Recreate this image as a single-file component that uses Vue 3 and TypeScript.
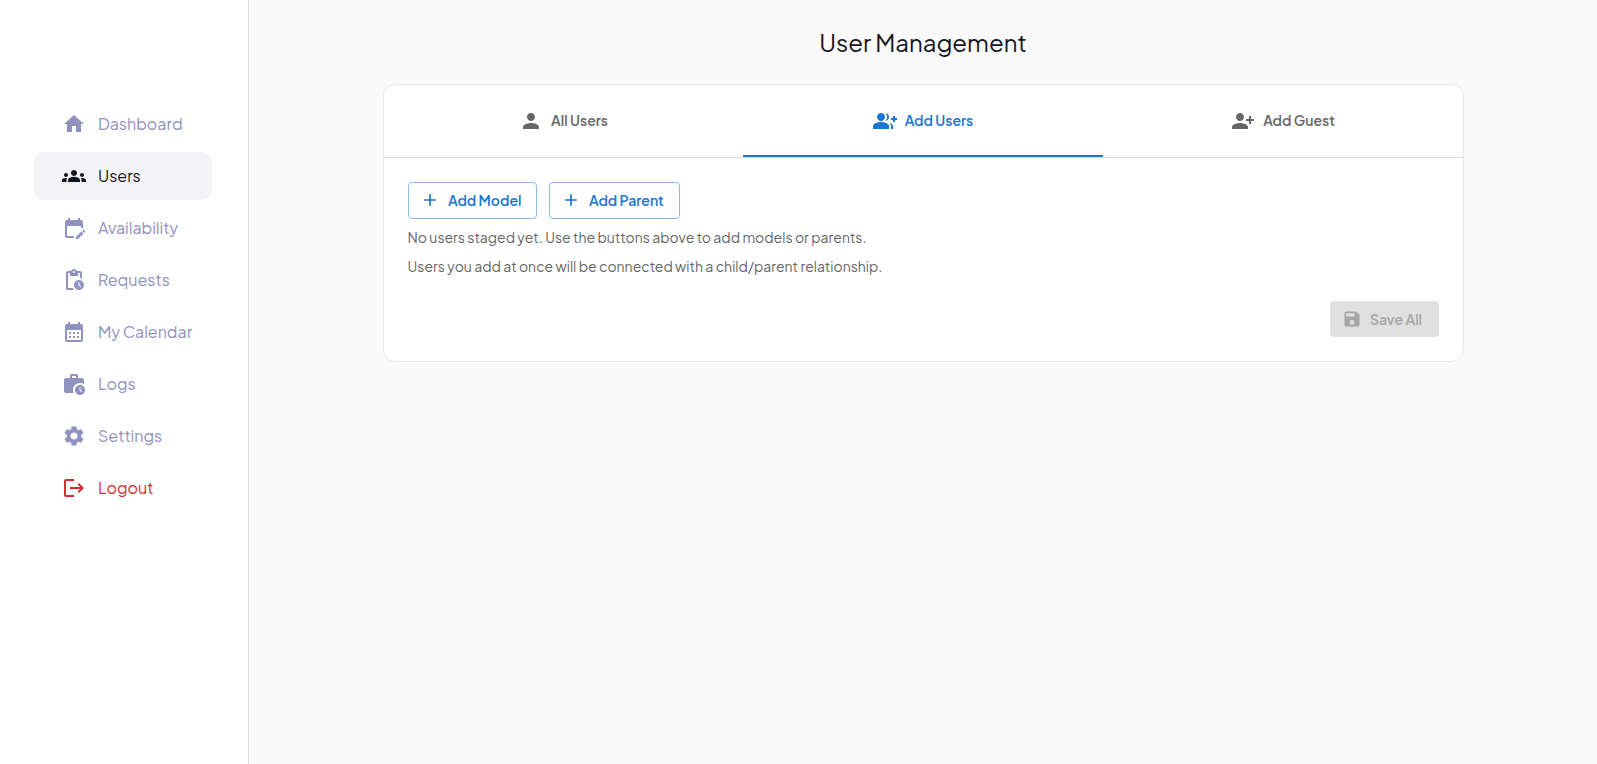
<script setup lang="ts">
interface NavItem {
  label: string
  icon: string
  kind: string
}

const nav: NavItem[] = [
  { label: 'Dashboard', kind: 'dashboard', icon: 'M10 20v-6h4v6h5v-8h3L12 3 2 12h3v8z' },
  {
    label: 'Users',
    kind: 'users',
    icon: 'M12 12.75c1.63 0 3.07.39 4.24.9 1.08.48 1.76 1.56 1.76 2.73V18H6v-1.61c0-1.18.68-2.26 1.76-2.73 1.17-.52 2.61-.91 4.24-.91M4 13c1.1 0 2-.9 2-2s-.9-2-2-2-2 .9-2 2 .9 2 2 2m1.13 1.1c-.37-.06-.74-.1-1.13-.1-.99 0-1.93.21-2.78.58C.48 14.9 0 15.62 0 16.43V18h4.5v-1.61c0-.83.23-1.61.63-2.29M20 13c1.1 0 2-.9 2-2s-.9-2-2-2-2 .9-2 2 .9 2 2 2m4 3.43c0-.81-.48-1.53-1.22-1.85-.85-.37-1.79-.58-2.78-.58-.39 0-.76.04-1.13.1.4.68.63 1.46.63 2.29V18H24zM12 6c1.66 0 3 1.34 3 3s-1.34 3-3 3-3-1.34-3-3 1.34-3 3-3',
  },
  {
    label: 'Availability',
    kind: 'availability',
    icon: 'M5 10h14v2h2V6c0-1.1-.9-2-2-2h-1V2h-2v2H8V2H6v2H5c-1.11 0-1.99.9-1.99 2L3 20c0 1.1.89 2 2 2h7v-2H5V10zm17.84 6.28-.71.71-2.12-2.12.71-.71c.39-.39 1.02-.39 1.41 0l.71.71c.39.39.39 1.02 0 1.41zm-3.54-.7 2.12 2.12-5.3 5.3H14v-2.12l5.3-5.3z',
  },
  {
    label: 'Requests',
    kind: 'requests',
    icon: 'M17 12c-2.76 0-5 2.24-5 5s2.24 5 5 5 5-2.24 5-5-2.24-5-5-5zm1.65 7.35L16.5 17.2V14h1v2.79l1.85 1.85-.7.71zM18 3h-3.18C14.4 1.84 13.3 1 12 1s-2.4.84-2.82 2H6c-1.1 0-2 .9-2 2v15c0 1.1.9 2 2 2h6.11c-.59-.57-1.07-1.25-1.42-2H6V5h2v3h8V5h2v5.08c.71.1 1.38.31 2 .6V5c0-1.1-.9-2-2-2zm-6 2c-.55 0-1-.45-1-1s.45-1 1-1 1 .45 1 1-.45 1-1 1z',
  },
  {
    label: 'My Calendar',
    kind: 'calendar',
    icon: 'M19 4h-1V2h-2v2H8V2H6v2H5c-1.11 0-1.99.9-1.99 2L3 20c0 1.1.89 2 2 2h14c1.1 0 2-.9 2-2V6c0-1.1-.9-2-2-2zm0 16H5V10h14v10zM9 14H7v-2h2v2zm4 0h-2v-2h2v2zm4 0h-2v-2h2v2zm-8 4H7v-2h2v2zm4 0h-2v-2h2v2zm4 0h-2v-2h2v2z',
  },
  {
    label: 'Logs',
    kind: 'logs',
    icon: 'M18 11c1.49 0 2.87.47 4 1.26V8c0-1.11-.89-2-2-2h-4V4c0-1.11-.89-2-2-2h-4c-1.11 0-2 .89-2 2v2H4c-1.11 0-1.99.89-1.99 2L2 19c0 1.11.89 2 2 2h7.68c-.43-.91-.68-1.92-.68-3 0-3.87 3.13-7 7-7zm-8-7h4v2h-4V4zM18 13c-2.76 0-5 2.24-5 5s2.24 5 5 5 5-2.24 5-5-2.24-5-5-5zm1.65 7.35L17.5 18.2V15h1v2.79l1.85 1.85-.7.71z',
  },
  {
    label: 'Settings',
    kind: 'settings',
    icon: 'M19.14 12.94c.04-.3.06-.61.06-.94 0-.32-.02-.64-.07-.94l2.03-1.58c.18-.14.23-.41.12-.61l-1.92-3.32c-.12-.22-.37-.29-.59-.22l-2.39.96c-.5-.38-1.03-.7-1.62-.94l-.36-2.54c-.04-.24-.24-.41-.48-.41h-3.84c-.24 0-.43.17-.47.41l-.36 2.54c-.59.24-1.13.57-1.62.94l-2.39-.96c-.22-.08-.47 0-.59.22L2.74 8.87c-.12.21-.08.47.12.61l2.03 1.58c-.05.3-.09.63-.09.94s.02.64.07.94l-2.03 1.58c-.18.14-.23.41-.12.61l1.92 3.32c.12.22.37.29.59.22l2.39-.96c.5.38 1.03.7 1.62.94l.36 2.54c.05.24.24.41.48.41h3.84c.24 0 .44-.17.47-.41l.36-2.54c.59-.24 1.13-.56 1.62-.94l2.39.96c.22.08.47 0 .59-.22l1.92-3.32c.12-.22.07-.47-.12-.61zM12 15.6c-1.98 0-3.6-1.62-3.6-3.6s1.62-3.6 3.6-3.6 3.6 1.62 3.6 3.6-1.62 3.6-3.6 3.6',
  },
  {
    label: 'Logout',
    kind: 'logout',
    icon: 'm17 7-1.41 1.41L18.17 11H8v2h10.17l-2.58 2.58L17 17l5-5zM4 5h8V3H4c-1.1 0-2 .9-2 2v14c0 1.1.9 2 2 2h8v-2H4z',
  },
]

const tabs: NavItem[] = [
  { label: 'All Users', kind: 'all', icon: 'M12 12c2.21 0 4-1.79 4-4s-1.79-4-4-4-4 1.79-4 4 1.79 4 4 4m0 2c-2.67 0-8 1.34-8 4v2h16v-2c0-2.66-5.33-4-8-4' },
  {
    label: 'Add Users',
    kind: 'add',
    icon: 'M22 9V7h-2v2h-2v2h2v2h2v-2h2V9zM8 12c2.21 0 4-1.79 4-4s-1.79-4-4-4-4 1.79-4 4 1.79 4 4 4m0 1c-2.67 0-8 1.34-8 4v3h16v-3c0-2.66-5.33-4-8-4m4.51-8.95C13.43 5.11 14 6.49 14 8s-.57 2.89-1.49 3.95C14.47 11.7 16 10.04 16 8s-1.53-3.7-3.49-3.95m4.02 9.78C17.42 14.66 18 15.7 18 17v3h2v-3c0-1.45-1.59-2.51-3.47-3.17',
  },
  {
    label: 'Add Guest',
    kind: 'guest',
    icon: 'M13 8c0-2.21-1.79-4-4-4S5 5.79 5 8s1.79 4 4 4 4-1.79 4-4m2 2v2h3v3h2v-3h3v-2h-3V7h-2v3zM1 18v2h16v-2c0-2.66-5.33-4-8-4s-8 1.34-8 4',
  },
]
</script>

<template>
  <div class="page">
    <aside class="sidebar">
      <nav class="nav">
        <a v-for="n in nav" :key="n.kind" class="item" :class="n.kind">
          <svg viewBox="0 0 24 24"><path :d="n.icon" /></svg>
          <span>{{ n.label }}</span>
        </a>
      </nav>
    </aside>
    <main class="main">
      <h1>User Management</h1>
      <section class="card">
        <div class="tabs">
          <button v-for="t in tabs" :key="t.kind" class="tab" :class="t.kind">
            <svg viewBox="0 0 24 24"><path :d="t.icon" /></svg>
            <span>{{ t.label }}</span>
          </button>
        </div>
        <div class="body">
          <div class="actions">
            <button class="outlined model">
              <svg viewBox="0 0 24 24"><path d="M19 13h-6v6h-2v-6H5v-2h6V5h2v6h6z" /></svg>
              <span>Add Model</span>
            </button>
            <button class="outlined parent">
              <svg viewBox="0 0 24 24"><path d="M19 13h-6v6h-2v-6H5v-2h6V5h2v6h6z" /></svg>
              <span>Add Parent</span>
            </button>
          </div>
          <p class="first">No users staged yet. Use the buttons above to add models or parents.</p>
          <p class="second">Users you add at once will be connected with a child/parent relationship.</p>
          <div class="footer">
            <button class="save" disabled>
              <svg viewBox="0 0 24 24">
                <path d="M17 3H5c-1.11 0-2 .9-2 2v14c0 1.1.89 2 2 2h14c1.1 0 2-.9 2-2V7zm-5 16c-1.66 0-3-1.34-3-3s1.34-3 3-3 3 1.34 3 3-1.34 3-3 3m3-10H5V5h10z" />
              </svg>
              <span>Save All</span>
            </button>
          </div>
        </div>
      </section>
    </main>
  </div>
</template>

<style>
body {
  margin: 0;
  background: #fafafa;
}
</style>

<style scoped>
.page {
  display: flex;
  height: 764px;
  overflow: hidden;
  font-family: "Plus Jakarta Sans", Inter, "Liberation Sans", sans-serif;
  background: #fafafa;
}
svg {
  display: block;
  flex: none;
  fill: currentColor;
}
button {
  margin: 0;
  padding: 0;
  border: 0;
  background: none;
  font: inherit;
  white-space: nowrap;
}
.sidebar {
  box-sizing: border-box;
  flex: none;
  width: 249px;
  padding: 100px 36px 0 34px;
  background: #fff;
  border-right: 1px solid #dcdcde;
}
.nav {
  display: flex;
  flex-direction: column;
  gap: 4px;
}
.item {
  display: flex;
  align-items: center;
  box-sizing: border-box;
  height: 48px;
  padding-left: 28px;
  gap: 12px;
  border-radius: 10px;
  color: #9092c0;
  font-size: 16px;
  line-height: 24px;
  font-weight: 400;
  white-space: nowrap;
}
.item svg {
  width: 24px;
  height: 24px;
}
.users {
  background: #f4f4f7;
  color: #141522;
}
.logout {
  color: #d32f2f;
}
.main {
  flex: 1;
  display: flex;
  flex-direction: column;
  align-items: center;
}
h1 {
  margin: 24px 0 28px;
  height: 32px;
  line-height: 36px;
  font-size: 24px;
  font-weight: 400;
  color: #141522;
}
.card {
  box-sizing: border-box;
  width: 1081px;
  height: 278px;
  margin-left: 1px;
  border: 1px solid #e8e8e9;
  border-radius: 12px;
  background: #fff;
}
.tabs {
  display: grid;
  grid-template-columns: 359px 360px 360px;
  height: 72px;
  border-bottom: 1px solid #dedede;
}
.tab {
  display: flex;
  align-items: center;
  justify-content: center;
  box-sizing: border-box;
  gap: 8px;
  color: #666;
  font-size: 14px;
  font-weight: 600;
  line-height: 18px;
}
.tab svg {
  width: 24px;
  height: 24px;
}
.tab span {
  margin-top: -2px;
}
.tab.add {
  padding-top: 2px;
  border-bottom: 2px solid #1976d2;
  color: #1976d2;
}
.body {
  padding: 24px;
}
.actions {
  display: flex;
  gap: 12px;
}
.outlined {
  display: flex;
  align-items: center;
  box-sizing: border-box;
  height: 37px;
  padding-left: 11px;
  border: 1px solid #8cbae8;
  border-radius: 4px;
  color: #1976d2;
  font-size: 14px;
  font-weight: 600;
}
.outlined svg,
.save svg {
  width: 20px;
  height: 20px;
  margin: 0 8px 0 0;
}
.outlined svg,
.outlined span {
  margin-top: -1px;
}
.model {
  width: 129px;
}
.parent {
  width: 131px;
}
p {
  margin: 0 0 0 -0.5px;
  font-size: 14px;
  line-height: 20px;
  font-weight: 400;
  color: #666;
  white-space: nowrap;
}
.first {
  margin-top: 8px;
}
.second {
  margin-top: 9px;
}
.footer {
  display: flex;
  justify-content: flex-end;
  margin-top: 25px;
}
.save {
  display: flex;
  align-items: center;
  box-sizing: border-box;
  width: 109px;
  height: 36px;
  padding-left: 12px;
  border-radius: 4px;
  background: #e0e0e0;
  color: #a6a6a6;
  font-size: 14px;
  font-weight: 600;
}
</style>
